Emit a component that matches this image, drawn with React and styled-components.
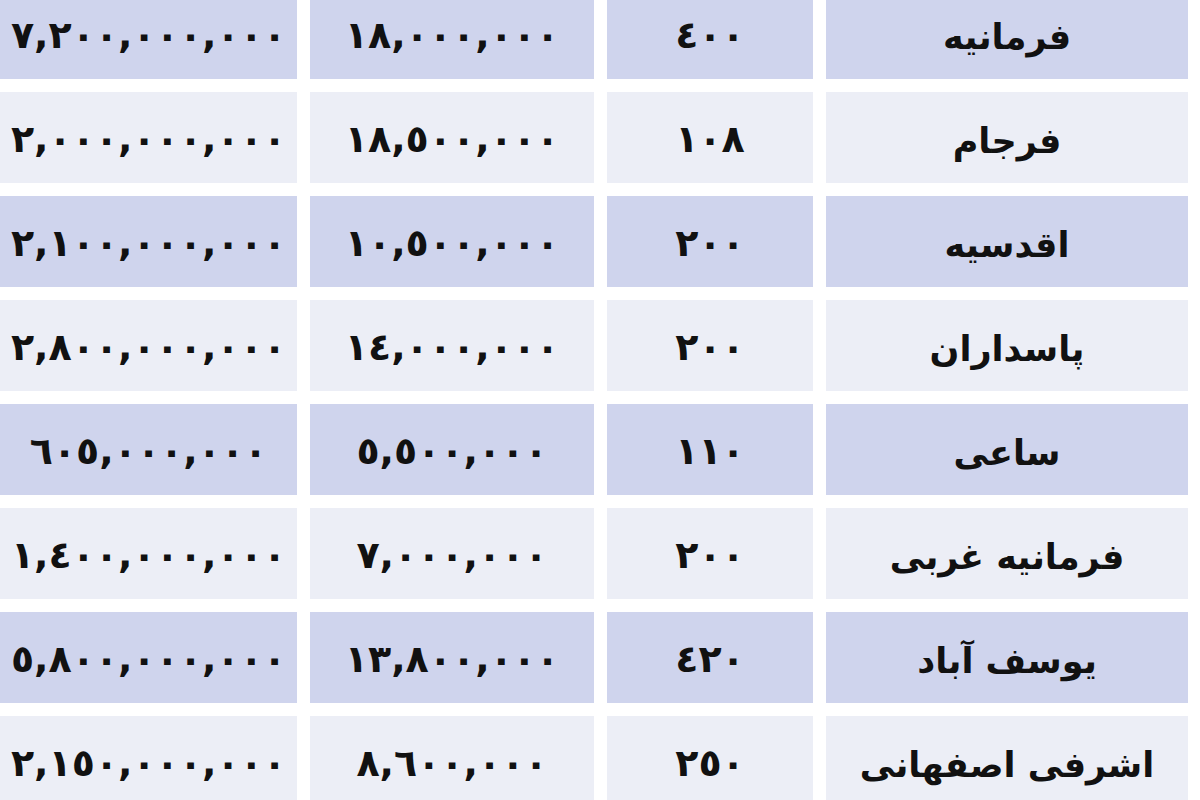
import React from "react";
import styled, { createGlobalStyle } from "styled-components";

const Global = createGlobalStyle`
  html, body { margin: 0; padding: 0; background: #ffffff; }
  body { width: 1200px; height: 800px; overflow: hidden; }
`;

const Table = styled.div`
  direction: rtl;
  display: flex;
  flex-direction: column;
  gap: 13px;
  margin-top: -12px;
  padding-right: 12px;
  font-family: "DejaVu Sans", "Noto Sans", sans-serif;
  font-weight: bold;
  color: #111;
`;

const Row = styled.div`
  display: grid;
  grid-template-columns: 362px 206px 284px 297px;
  column-gap: 13px;
  height: 91px;
`;

const Cell = styled.div`
  display: flex;
  align-items: center;
  justify-content: center;
  background: ${(p) => (p.$alt ? "#eceef6" : "#cfd4ed")};
  font-size: ${(p) => (p.$name ? "35px" : "38px")};
  white-space: nowrap;
  overflow: visible;
  padding-top: ${(p) => (p.$name ? "6px" : "2px")};
`;

const Num = styled.span`
  direction: ltr;
  unicode-bidi: isolate;
  letter-spacing: 2px;
`;

const data = [
  ["فرمانیه", "٤٠٠", "١٨,٠٠٠,٠٠٠", "٧,٢٠٠,٠٠٠,٠٠٠"],
  ["فرجام", "١٠٨", "١٨,٥٠٠,٠٠٠", "٢,٠٠٠,٠٠٠,٠٠٠"],
  ["اقدسیه", "٢٠٠", "١٠,٥٠٠,٠٠٠", "٢,١٠٠,٠٠٠,٠٠٠"],
  ["پاسداران", "٢٠٠", "١٤,٠٠٠,٠٠٠", "٢,٨٠٠,٠٠٠,٠٠٠"],
  ["ساعی", "١١٠", "٥,٥٠٠,٠٠٠", "٦٠٥,٠٠٠,٠٠٠"],
  ["فرمانیه غربی", "٢٠٠", "٧,٠٠٠,٠٠٠", "١,٤٠٠,٠٠٠,٠٠٠"],
  ["یوسف آباد", "٤٢٠", "١٣,٨٠٠,٠٠٠", "٥,٨٠٠,٠٠٠,٠٠٠"],
  ["اشرفی اصفهانی", "٢٥٠", "٨,٦٠٠,٠٠٠", "٢,١٥٠,٠٠٠,٠٠٠"],
];

export default function App() {
  return (
    <>
      <Global />
      <Table>
        {data.map((r, i) => (
          <Row key={i}>
            <Cell $alt={i % 2 === 1} $name>{r[0]}</Cell>
            {r.slice(1).map((v, j) => (
              <Cell key={j} $alt={i % 2 === 1}>
                <Num>{v}</Num>
              </Cell>
            ))}
          </Row>
        ))}
      </Table>
    </>
  );
}
